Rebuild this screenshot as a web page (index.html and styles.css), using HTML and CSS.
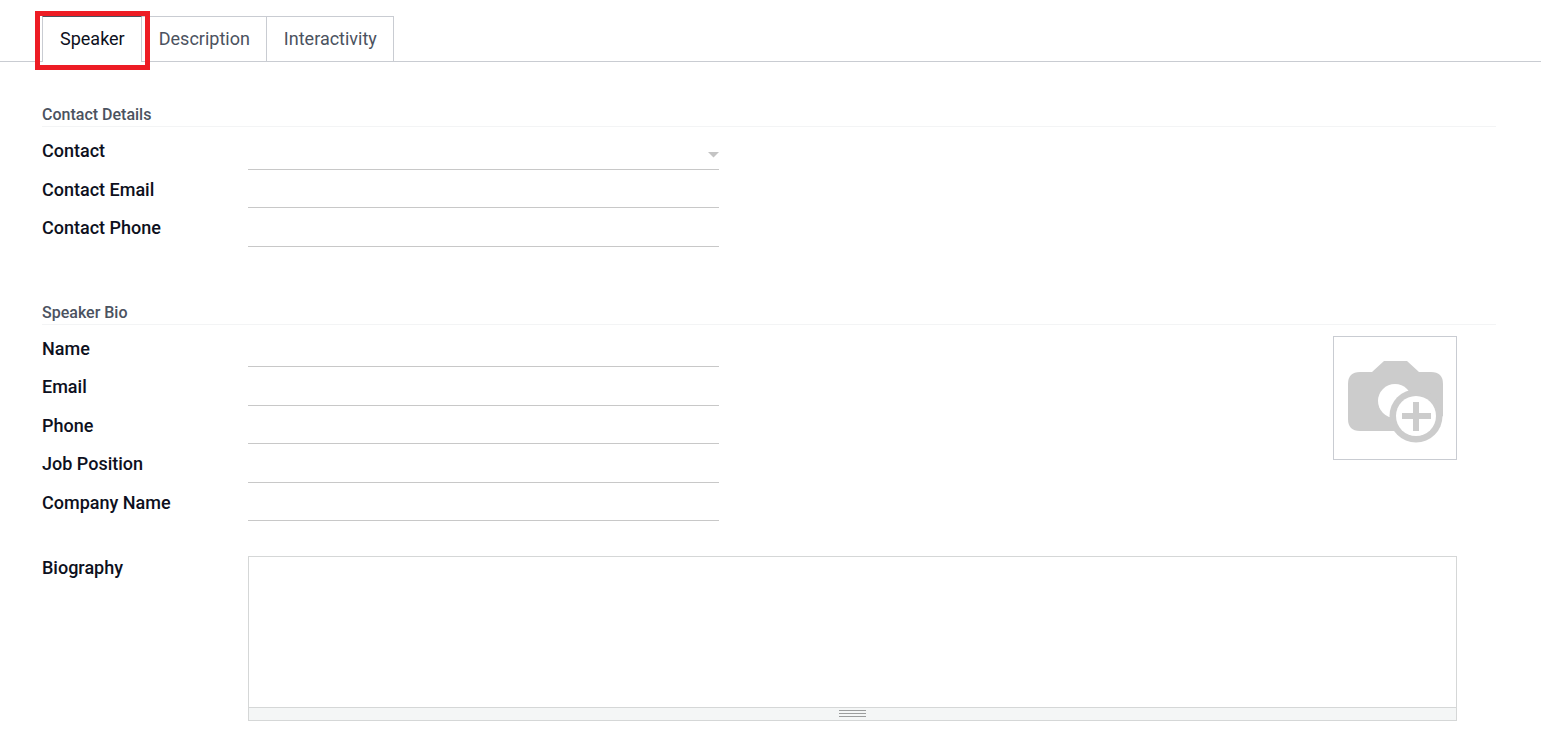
FILE: index.html
```html
<!DOCTYPE html>
<html lang="en">
<head>
<meta charset="utf-8">
<meta name="viewport" content="width=device-width, initial-scale=1">
<title>Speaker</title>
<link rel="stylesheet" href="styles.css">
</head>
<body>
<nav class="tabs" role="tablist">
  <button class="tab tab-active" type="button" role="tab" aria-selected="true">Speaker</button>
  <button class="tab" type="button" role="tab" aria-selected="false">Description</button>
  <button class="tab" type="button" role="tab" aria-selected="false">Interactivity</button>
</nav>
<form class="sheet">
  <section class="section">
    <h2 class="section-title">Contact Details</h2>
    <div class="columns">
      <div class="fields">
        <div class="field">
          <label class="label" for="contact">Contact</label>
          <div class="control">
            <select class="input" id="contact"><option></option></select>
            <svg class="caret" viewBox="0 0 11 6" aria-hidden="true"><path d="M0 0h11L5.500 5.500z"/></svg>
          </div>
        </div>
        <div class="field">
          <label class="label" for="contact-email">Contact Email</label>
          <input class="input" id="contact-email" type="email">
        </div>
        <div class="field">
          <label class="label" for="contact-phone">Contact Phone</label>
          <input class="input" id="contact-phone" type="tel">
        </div>
      </div>
    </div>
  </section>
  <section class="section">
    <h2 class="section-title">Speaker Bio</h2>
    <div class="columns">
      <div class="fields fields-bio">
        <div class="field">
          <label class="label" for="name">Name</label>
          <input class="input" id="name" type="text">
        </div>
        <div class="field">
          <label class="label" for="email">Email</label>
          <input class="input" id="email" type="email">
        </div>
        <div class="field">
          <label class="label" for="phone">Phone</label>
          <input class="input" id="phone" type="tel">
        </div>
        <div class="field">
          <label class="label" for="job">Job Position</label>
          <input class="input" id="job" type="text">
        </div>
        <div class="field">
          <label class="label" for="company">Company Name</label>
          <input class="input" id="company" type="text">
        </div>
      </div>
      <button class="photo" type="button" aria-label="Add photo">
        <svg class="photo-icon" viewBox="0 0 122 122" aria-hidden="true">
          <path class="fill" d="M26 35H38L50 24H73L85 35H97Q109 35 109 47V79L82 94H26Q14 94 14 82V47Q14 35 26 35Z"/>
          <circle class="hole" cx="61" cy="64" r="17"/>
          <circle class="fill" cx="82" cy="79" r="26.500"/>
          <circle class="hole" cx="82" cy="79" r="20"/>
          <path class="fill" d="M79 65h6v11h12v6H85v12h-6V82H68v-6h11z"/>
        </svg>
      </button>
    </div>
  </section>
  <div class="field biography">
    <label class="label" for="biography">Biography</label>
    <div class="editor">
      <textarea class="textarea" id="biography"></textarea>
      <div class="handle">
        <svg class="grip" viewBox="0 0 27 7" aria-hidden="true"><path d="M0 0h27v1H0zM0 3h27v1H0zM0 6h27v1H0z"/></svg>
      </div>
    </div>
  </div>
</form>
</body>
</html>
```
FILE: styles.css
```css
* {
  box-sizing: border-box;
}

body {
  margin: 0;
  background: #fff;
  color: #0d1020;
  font: 18px/27px Roboto, sans-serif;
}

button,
input,
select,
textarea {
  font: inherit;
  color: inherit;
}

.tabs {
  display: flex;
  padding: 16px 42px 0;
  border-bottom: 1px solid #c9ccd2;
}

.tab {
  position: relative;
  height: 45px;
  padding: 0 16px 2px 17px;
  border: 1px solid #c9ccd2;
  border-width: 1px 1px 0 0;
  background: #fff;
  color: #4b5260;
}

.tab-active {
  height: 46px;
  margin-bottom: -1px;
  border-left-width: 1px;
  border-top-color: #4b5260;
  color: #0d1020;
}

.tab-active::after {
  content: "";
  position: absolute;
  inset: -6px -9px -8px -8px;
  z-index: 1;
  border: 5px solid #ed1c24;
}

.sheet {
  padding: 42px 45px 12px 42px;
}

.section + .section {
  margin-top: 55px;
}

.section-title {
  margin: 0;
  border-bottom: 1px solid #f3f4f5;
  color: #4b5260;
  font-size: 16px;
  font-weight: 500;
  line-height: 22px;
}

.columns {
  display: grid;
  grid-template-columns: 1fr 1fr;
  column-gap: 61px;
  margin-right: 39px;
  padding-top: 4px;
}

.fields {
  display: grid;
  grid-auto-rows: 39px 38px;
}

.fields-bio {
  grid-auto-rows: 38px 39px;
}

.field {
  display: grid;
  grid-template-columns: 206px 1fr;
}

.label {
  padding-top: 6px;
  font-weight: 500;
}

.control {
  position: relative;
  display: grid;
}

.input {
  width: 100%;
  min-width: 0;
  padding: 0;
  border: 0;
  border-bottom: 1px solid #c8c8c8;
  border-radius: 0;
  background: transparent;
  appearance: none;
}

.caret {
  position: absolute;
  top: 21px;
  right: 0;
  width: 11px;
  height: 6px;
  fill: #c4c4c4;
  pointer-events: none;
}

.photo {
  justify-self: end;
  width: 124px;
  height: 124px;
  margin-top: 7px;
  padding: 0;
  border: 1px solid #c9ccd2;
  background: #fff;
}

.photo-icon {
  display: block;
}

.fill {
  fill: #ccc;
}

.hole {
  fill: #fff;
}

.biography {
  margin-top: 35px;
  margin-right: 39px;
}

.biography .label {
  padding-top: 0;
  line-height: 24px;
}

.editor {
  border: 1px solid #d5d7d7;
}

.textarea {
  display: block;
  width: 100%;
  height: 150px;
  padding: 8px;
  border: 0;
  resize: none;
}

.handle {
  display: flex;
  justify-content: center;
  height: 13px;
  padding-top: 2px;
  border-top: 1px solid #d5d7d7;
  background: #f4f6f6;
}

.grip {
  width: 27px;
  height: 7px;
  fill: #9b9d9d;
}
```
